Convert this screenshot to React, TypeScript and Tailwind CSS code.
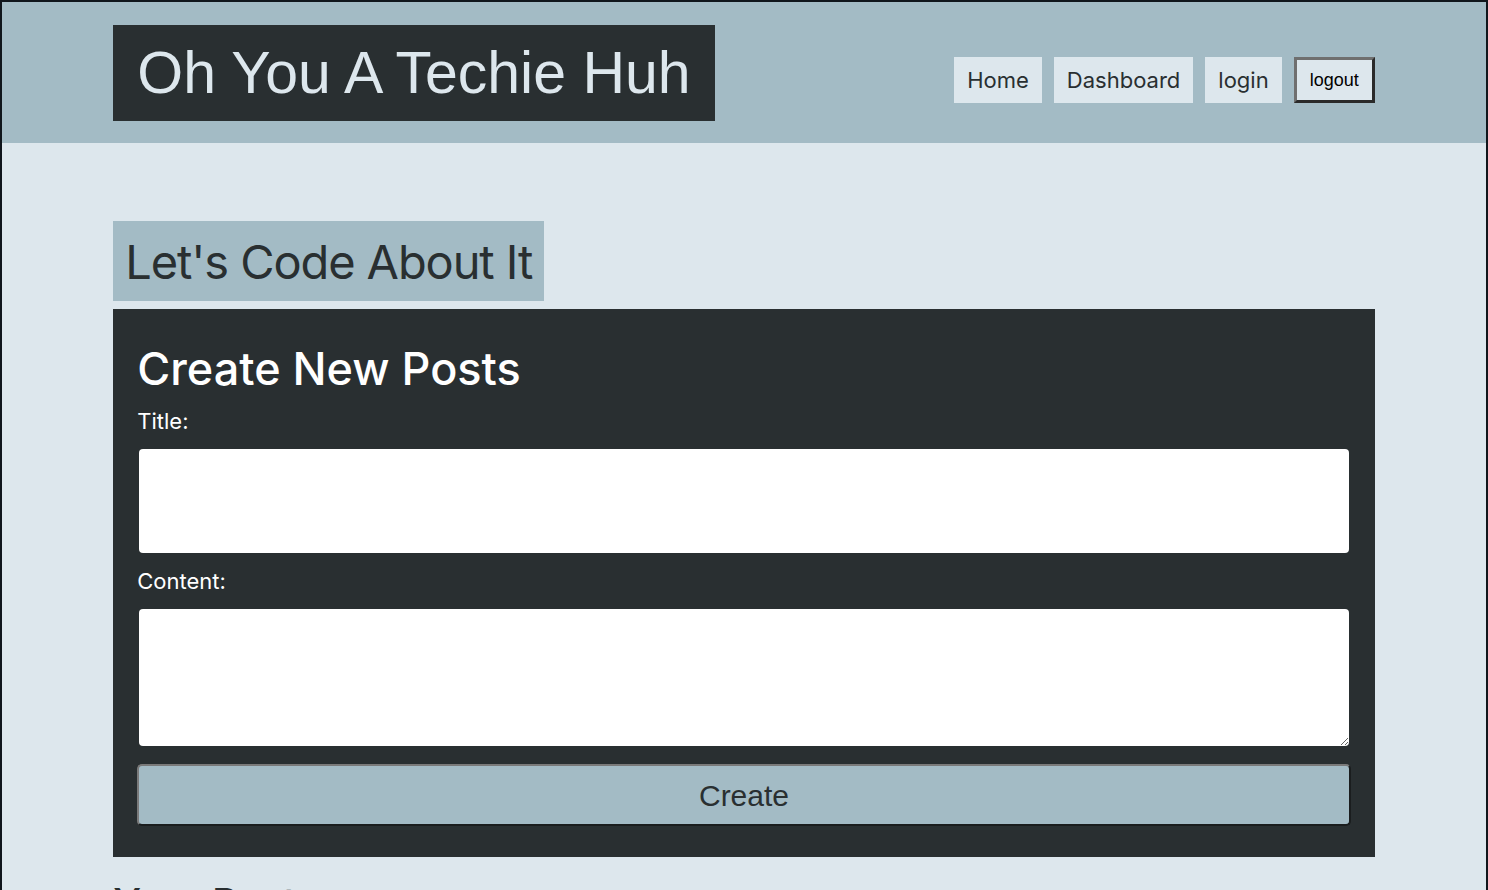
const navBtn =
  "bg-[#dde7ed] text-[#292f31] text-[22px] leading-none h-[46px] px-[13px] flex items-center"

const App = () => {
  return (
    <div className="min-h-screen bg-[#dde7ed] border-x-2 border-t-2 border-[#10161c] font-['Inter',sans-serif] text-[#292f31]">
      <header className="bg-[#a3bbc5] h-[141px]">
        <div className="w-[85%] mx-auto flex justify-between items-start pt-[23px]">
          <h1 className="bg-[#292f31] text-[#dde7ed] font-['Liberation_Sans',Arial,sans-serif] text-[59px] leading-none h-[96px] px-[24px] flex items-center">
            Oh You A Techie Huh
          </h1>
          <nav className="flex gap-[12px] mt-[32px]">
            <a className={navBtn}>Home</a>
            <a className={navBtn}>Dashboard</a>
            <a className={navBtn}>login</a>
            <button className="bg-[#dde7ed] text-black font-['Liberation_Sans',Arial,sans-serif] text-[18px] h-[46px] w-[81px] border-[3px] border-t-[#6f6f6f] border-l-[#6f6f6f] border-r-[#2a2a2a] border-b-[#2a2a2a]">
              logout
            </button>
          </nav>
        </div>
      </header>

      <main className="w-[85%] mx-auto pt-[78px]">
        <div className="inline-flex items-center bg-[#a3bbc5] h-[80px] px-[12px]">
          <h2 className="text-[47px] tracking-[-1.1px] leading-none text-[#292f31]">Let's Code About It</h2>
        </div>

        <section className="bg-[#292f31] mt-[8px] px-[24px] pt-[32px] pb-[31px]">
          <h3 className="text-white text-[45px] font-medium leading-[56px]">Create New Posts</h3>
          <form className="flex flex-col">
            <label className="text-white text-[22px] leading-[28px] mt-[10px]">Title:</label>
            <input
              type="text"
              className="bg-white rounded-[4px] h-[104px] mx-[2px] mt-[14px] px-3 text-xl outline-none"
            />
            <label className="text-white text-[22px] leading-[28px] mt-[14px]">Content:</label>
            <textarea className="bg-white rounded-[4px] h-[137px] mx-[2px] mt-[14px] px-3 text-xl outline-none" />
            <button
              type="button"
              className="mt-[18px] h-[62px] bg-[#a3bbc5] rounded-[5px] border-2 border-t-[#7a7a7a] border-l-[#7a7a7a] border-r-[#1a1d1e] border-b-[#1a1d1e] font-['Liberation_Sans',Arial,sans-serif] text-[30px] text-[#292f31]"
            >
              Create
            </button>
          </form>
        </section>

        <h2 className="mt-[26px] text-[40px] font-medium leading-none pb-10">Your Posts</h2>
      </main>
    </div>
  )
}

export default App
